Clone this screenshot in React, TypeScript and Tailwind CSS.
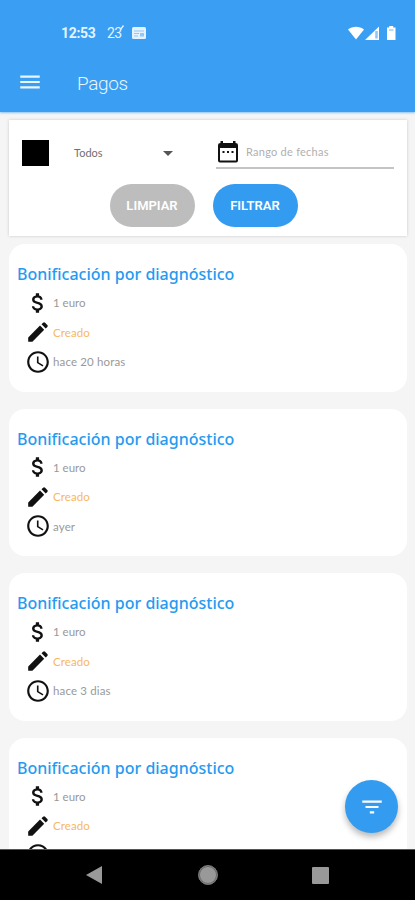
import { MdAccessTime, MdArrowDropDown, MdAttachMoney, MdFilterList, MdMenu } from 'react-icons/md'

const payments = [
  { id: 1, amount: '1 euro', status: 'Creado', date: 'hace 20 horas' },
  { id: 2, amount: '1 euro', status: 'Creado', date: 'ayer' },
  { id: 3, amount: '1 euro', status: 'Creado', date: 'hace 3 dias' },
  { id: 4, amount: '1 euro', status: 'Creado', date: '' },
]

function PencilIcon() {
  return (
    <svg className="size-[26px]" viewBox="0 0 26 26" fill="#111">
      <path d="M3.200 22.800v-4.300L15 6.600l4.200 4.200L7.400 22.800Z" />
      <path d="m16.500 5.300 1.600-1.600q1-.9 2 0l2.200 2.200q1 1 0 2L20.700 9.500Z" />
    </svg>
  )
}

function CalendarIcon() {
  return (
    <svg className="size-6 shrink-0" viewBox="0 0 24 24">
      <path d="M4.500 1H7v2h10V1h2.500v2q2.500 0 2.500 2v15.500q0 2-2 2H4q-2 0-2-2V5q0-2 2.500-2Z" fill="#111" />
      <path d="M4 8h16v12.500H4Z" fill="#fff" />
      <path d="M6.500 11h2v2h-2Zm4.500 0h2v2h-2Zm4.500 0h2v2h-2Z" fill="#111" />
    </svg>
  )
}

function StatusBar() {
  return (
    <div className="flex h-[52px] items-end justify-between pr-[18px] pb-2 pl-[61px] font-['Roboto',sans-serif] text-sm leading-[22px] text-[#e4f3ff]">
      <div className="flex items-center">
        <span className="w-[46px] font-bold tracking-[-0.3px]">12:53</span>
        <span className="relative w-[25px] tracking-[-0.5px]">
          23
          <svg className="absolute top-[3px] left-[13px] size-[5px]" viewBox="0 0 5 5">
            <path d="M.5 4.500 3.500.5" stroke="#e4f3ff" strokeWidth="1.3" />
          </svg>
        </span>
        <svg className="h-3 w-3.5" viewBox="0 0 14 12">
          <rect width="14" height="12" rx="1.5" fill="#e4f3ff" />
          <path d="M2 4h10M2 6.500h5M2 9h4" stroke="#8fc9f9" fill="none" />
          <path d="M8 6h4v3.500H8Z" fill="#8fc9f9" />
        </svg>
      </div>
      <svg className="mb-[3px] h-4 w-[49px]" viewBox="0 0 49 16" fill="#fff">
        <path d="M0 4.500C4.500.7 11.500.7 16 4.500L8 14.500Z" />
        <path d="M17 15 31 1.500V15Z" />
        <path d="M28.500 6v7.500" stroke="#8dc6f7" strokeWidth="2.5" />
        <path d="M39 2.500h2.200V1h4v1.500h2.300V15H39Z" />
        <path d="M41 5h4.500" stroke="#79b8ef" />
      </svg>
    </div>
  )
}

function Header() {
  return (
    <header className="relative z-10 h-28 shrink-0 bg-[#3a9ef2] shadow-[0_1px_2px_rgba(58,158,242,0.6)]">
      <StatusBar />
      <div className="flex h-[60px] items-center pl-[17px] text-[#e9f5ff]">
        <MdMenu className="size-[26px]" />
        <h1 className="mt-1 ml-[34px] font-['Roboto',sans-serif] text-[19px] font-light tracking-[-0.35px]">Pagos</h1>
      </div>
    </header>
  )
}

function Filters() {
  return (
    <section className="h-[116px] shrink-0 bg-white px-[13px] pt-[18px] shadow-[0_0_3px_rgba(0,0,0,0.18)]">
      <div className="flex h-[30px] items-center">
        <div className="h-[26px] w-[27px] bg-black" />
        <button className="ml-[25px] flex w-[106px] items-center justify-between text-[11px] text-[#707070]">
          Todos
          <MdArrowDropDown className="size-6 text-[#555]" />
        </button>
        <div className="ml-9 flex h-[31px] w-[178px] items-center border-b-2 border-[#c4c4c4] text-[11px] tracking-[0.25px] text-[#b0b0b0]">
          <CalendarIcon />
          <span className="ml-[6px]">Rango de fechas</span>
        </div>
      </div>
      <div className="mt-4 flex justify-center gap-[18px] pr-[9px] font-['Roboto',sans-serif] text-[13px] font-semibold text-white">
        <button className="h-[43px] w-[85px] rounded-full bg-[#bdbdbd]">LIMPIAR</button>
        <button className="h-[43px] w-[85px] rounded-full bg-[#339bf0]">FILTRAR</button>
      </div>
    </section>
  )
}

function PaymentCard({ payment }: { payment: (typeof payments)[number] }) {
  return (
    <article className="h-[147.500px] shrink-0 rounded-2xl bg-white px-2 pt-[18px]">
      <h2 className="h-[26px] font-['Noto_Sans',sans-serif] text-base leading-6 font-medium whitespace-nowrap text-[#259af0]">
        Bonificación por diagnóstico
      </h2>
      <ul className="pl-2 text-[11.5px] text-[#999]">
        <li className="flex h-[29.500px] items-center gap-[2px]">
          <MdAttachMoney className="size-[26px] text-[#111]" />
          {payment.amount}
        </li>
        <li className="flex h-[29.500px] items-center gap-[2px] tracking-[0.1px] text-[#f7b860]">
          <PencilIcon />
          {payment.status}
        </li>
        <li className="flex h-[29.500px] items-center gap-[2px] tracking-[0.15px]">
          <MdAccessTime className="size-[26px] text-[#111]" />
          {payment.date}
        </li>
      </ul>
    </article>
  )
}

function NavigationBar() {
  return (
    <nav className="z-10 flex h-[51px] shrink-0 items-center justify-between border-t border-[#555] bg-black pr-[86px] pl-[86px]">
      <svg className="h-[18px] w-4" viewBox="0 0 16 18">
        <path d="M16 0v18L0 9Z" fill="#999" />
      </svg>
      <div className="ml-px size-5 rounded-full border border-[#777] bg-[#999] shadow-[inset_0_0_0_1px_#666]" />
      <div className="size-[17px] rounded-[1px] bg-[#999]" />
    </nav>
  )
}

export default function App() {
  return (
    <div className="relative flex h-[900px] w-[415px] flex-col overflow-hidden bg-[#f5f5f5] font-['Lato',sans-serif]">
      <Header />
      <main className="flex min-h-0 flex-1 flex-col overflow-hidden pt-2 pr-2 pl-[9px]">
        <Filters />
        <div className="mt-2 flex flex-col gap-[17px]">
          {payments.map((payment) => (
            <PaymentCard key={payment.id} payment={payment} />
          ))}
        </div>
      </main>
      <button className="absolute right-[17px] bottom-[67px] flex size-[53px] items-center justify-center rounded-full bg-[#339bf0] text-white shadow-[0_4px_6px_rgba(0,0,0,0.28)]">
        <MdFilterList className="size-[26px]" />
      </button>
      <NavigationBar />
    </div>
  )
}
